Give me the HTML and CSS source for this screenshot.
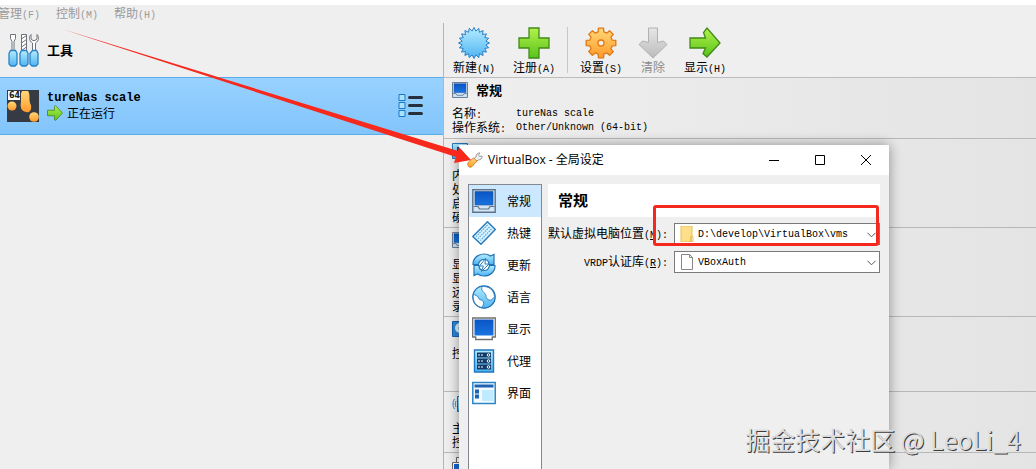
FILE: index.html
```
<!DOCTYPE html>
<html lang="zh-CN">
<head>
<meta charset="UTF-8">
<meta name="viewport" content="width=device-width, initial-scale=1.0">
<title>VirtualBox</title>
<link rel="stylesheet" href="styles.css">
</head>
<body>

<!-- Dégradés et icônes partagés -->
<svg class="defs" aria-hidden="true">
    <defs>
        <linearGradient id="blue" x1="0" y1="0" x2="0" y2="1"><stop offset="0" stop-color="#b4ecff"/><stop offset="1" stop-color="#4fb4f2"/></linearGradient>
        <linearGradient id="screen" x1="0" y1="0" x2="0" y2="1"><stop offset="0" stop-color="#0a55c4"/><stop offset="1" stop-color="#1873e0"/></linearGradient>
        <linearGradient id="green" x1="0" y1="0" x2="0" y2="1"><stop offset="0" stop-color="#b4f04c"/><stop offset="1" stop-color="#58c41a"/></linearGradient>
        <linearGradient id="orange" x1="0" y1="0" x2="0" y2="1"><stop offset="0" stop-color="#ffd878"/><stop offset="1" stop-color="#ff9a2a"/></linearGradient>
        <linearGradient id="grey" x1="0" y1="0" x2="0" y2="1"><stop offset="0" stop-color="#e6e6e6"/><stop offset="1" stop-color="#bcbcbc"/></linearGradient>
        <symbol id="pc" viewBox="0 0 24 24">
            <path d="M.8.8h22.400v22.400H.8z" fill="#d4e6f6" stroke="#5e7388" stroke-width="1.400"/>
            <path d="M3 2.500h18v13.500H3z" fill="url(#screen)" stroke="#1c4f96" stroke-width=".6"/>
            <path d="M1.500 17.500h4.500l1.500 2.500h9l1.500-2.500h4.500" fill="none" stroke="#5e7388" stroke-width="1.200"/>
        </symbol>
        <symbol id="arrow" viewBox="0 0 32 32">
            <path d="M1 10.500h14V2.500L17 1l14 15-14 15-2-1.500v-8H1z" fill="url(#green)" stroke="#3f7f16" stroke-width="1.500"/>
        </symbol>
    </defs>
</svg>

<!-- Menu -->
<nav class="menubar">
    <button class="menu">管理<span class="lat">(F)</span></button>
    <button class="menu">控制<span class="lat">(M)</span></button>
    <button class="menu">帮助<span class="lat">(H)</span></button>
</nav>

<main class="manager">
    <!-- Liste des machines -->
    <section class="sidebar">
        <div class="tools">
            <svg class="tools-icon" viewBox="0 0 32 34">
                <g fill="#fff" stroke="#6c7278">
                    <path d="M2.500 1.500h5v4l-1.500 3V18H4V8.500l-1.500-3z"/>
                    <path d="M13.500 1.500h5V18h-5z"/>
                    <path d="M23 1.500v4.500l2 1.500h2L29 6V1.500c2 2 2.500 6-1.500 8.500V18h-3v-8c-4-2.500-3.500-6.500-1.500-8.500z"/>
                    <path d="M13.500 6l5-3.500M13.500 10l5-3.500M13.500 14l5-3.500M13.500 17.500l5-3.500"/>
                </g>
                <g fill="url(#blue)" stroke="#2882c4" stroke-width="1.300">
                    <path d="M2.500 17.500h5l1.500 3V31l-2 2H3l-2-2V20.500z"/>
                    <path d="M13.500 17.500h5l1.500 3V31l-2 2h-4l-2-2V20.500z"/>
                    <path d="M24.500 17.500h4l1.500 3V31l-2 2h-4l-2-2V20.500z"/>
                </g>
            </svg>
            <span class="tools-label">工具</span>
        </div>
        <div class="machine">
            <svg class="machine-icon" viewBox="0 0 32 32">
                <path d="M0 0h32v32H0z" fill="#363a42"/>
                <path d="M15 1h6c3 4 0 9 3 14 1 6-2 8-5 7-5-1-6-5-5-10 0-5-1-7 1-11z" fill="url(#orange)"/>
                <circle cx="5" cy="16" r="4.500" fill="url(#orange)"/>
                <circle cx="27" cy="27" r="4.800" fill="url(#orange)"/>
                <path d="M0 0h14v11H0z" fill="#363a42"/>
                <path d="M1 1h12v9H1z" fill="#fff"/>
                <text x="2" y="8" class="badge64">64</text>
            </svg>
            <div class="machine-text">
                <span class="machine-name">tureNas scale</span>
                <span class="machine-state"><svg class="state-icon"><use href="#arrow"/></svg>正在运行</span>
            </div>
            <button class="machine-menu" aria-label="工具">
                <svg viewBox="0 0 24 26">
                    <g fill="#a8e2ff" stroke="#1878c8">
                        <path d="M.5 1.500h6v6h-6zM.5 9.500h6v6h-6zM.5 17.500h6v6h-6z"/>
                    </g>
                    <path d="M11 4.500h12M11 12.500h12M11 20.500h12" stroke="#26303c" stroke-width="3" stroke-linecap="round"/>
                </svg>
            </button>
        </div>
    </section>

    <!-- Barre d'outils et détails -->
    <section class="content">
        <div class="toolbar">
            <button class="tool">
                <svg viewBox="0 0 32 32"><path d="M16 .5L17.900 4.100 20.800 1.300 21.400 5.300 25.100 3.500 24.500 7.500 28.500 6.900 26.700 10.600 30.700 11.200 27.900 14.100 31.500 16 27.900 17.900 30.700 20.800 26.700 21.400 28.500 25.100 24.500 24.500 25.100 28.500 21.400 26.700 20.800 30.700 17.900 27.900 16 31.500 14.100 27.900 11.200 30.700 10.600 26.700 6.900 28.500 7.500 24.500 3.500 25.100 5.300 21.400 1.300 20.800 4.100 17.900 .5 16 4.100 14.100 1.300 11.200 5.300 10.600 3.500 6.900 7.500 7.500 6.900 3.500 10.600 5.300 11.200 1.300 14.100 4.100z" fill="url(#blue)" stroke="#2a80c8"/></svg>
                <span>新建<span class="lat">(N)</span></span>
            </button>
            <button class="tool">
                <svg viewBox="0 0 32 32"><path d="M11 1h10v10h10v10H21v10H11V21H1V11h10z" fill="url(#green)" stroke="#3f8a16" stroke-width="1.300"/></svg>
                <span>注册<span class="lat">(A)</span></span>
            </button>
            <span class="separator"></span>
            <button class="tool">
                <svg viewBox="-16 -16 32 32">
                    <path d="M-2.800-11.200L-2.600-14.800 2.600-14.800 2.800-11.200 5.900-9.900 8.600-12.300 12.300-8.600 9.900-5.900 11.200-2.800 14.800-2.600 14.800 2.600 11.200 2.800 9.900 5.900 12.300 8.600 8.600 12.300 5.900 9.900 2.800 11.200 2.600 14.800-2.600 14.800-2.800 11.200-5.900 9.900-8.600 12.300-12.300 8.600-9.900 5.900-11.200 2.800-14.800 2.600-14.800-2.600-11.200-2.800-9.900-5.900-12.300-8.600-8.600-12.300-5.900-9.900z" fill="url(#orange)" stroke="#e07814" stroke-width="1.300" stroke-linejoin="round"/>
                    <circle r="3" fill="#f4eee6" stroke="#e07814" stroke-width="1.300"/>
                </svg>
                <span>设置<span class="lat">(S)</span></span>
            </button>
            <button class="tool tool-narrow" disabled>
                <svg viewBox="0 0 32 32"><path d="M11.500 1h9v14.500l6-1.500 3.500 3.500L16 31 2 17.500 5.500 14l6 1.500z" fill="url(#grey)" stroke="#b0b0b0"/></svg>
                <span>清除</span>
            </button>
            <button class="tool">
                <svg viewBox="0 0 32 32"><path d="M1 11h15.500l-2-5.500L18 1l13 15-13 14-4-3.500 2.500-5.500H1z" fill="url(#green)" stroke="#3f8a16" stroke-width="1.300"/></svg>
                <span>显示<span class="lat">(H)</span></span>
            </button>
        </div>

        <div class="details">
            <div class="detail">
                <h2><svg><use href="#pc"/></svg>常规</h2>
                <p><span class="key">名称<span class="lat">:</span></span><span class="lat">tureNas scale</span></p>
                <p><span class="key">操作系统<span class="lat">:</span></span><span class="lat">Other/Unknown (64-bit)</span></p>
            </div>
            <div class="detail">
                <h2><svg viewBox="0 0 16 16"><path d="M.5.5h15v15H.5z" fill="url(#blue)" stroke="#2a78b8"/><path d="M5 4h6v8H5z" fill="#1c4c80"/></svg></h2>
                <p>内</p>
                <p>处</p>
                <p>启</p>
                <p>硬</p>
            </div>
            <div class="detail">
                <h2><svg><use href="#pc"/></svg></h2>
                <p>显</p>
                <p>显</p>
                <p>远</p>
                <p>录</p>
            </div>
            <div class="detail detail-tall">
                <h2><svg viewBox="0 0 16 16"><path d="M.5.5h15v15H.5z" fill="#2a86d8" stroke="#1a5ea8"/><circle cx="8" cy="7" r="5" fill="#d8f0ff"/><circle cx="8" cy="7" r="1.500" fill="#1a5ea8"/></svg></h2>
                <p>控</p>
            </div>
            <div class="detail">
                <h2><svg viewBox="0 0 16 16"><path d="M2.500 3c-2 3-2 7 0 10M4 5c-1 2-1 4 0 6" fill="none" stroke="#2a86d8"/><path d="M5.500.5h8v15h-8z" fill="url(#blue)" stroke="#1a6eb8"/></svg></h2>
                <p>主</p>
                <p>控</p>
            </div>
            <div class="detail">
                <h2><svg viewBox="0 0 16 16"><path d="M4.500.5h11v9h-11z" fill="#fff" stroke="#666"/><path d="M.5 5.500h11v10H.5z" fill="#fff" stroke="#666"/><path d="M2 7h8v7H2z" fill="#1462cc"/></svg></h2>
            </div>
        </div>
    </section>
</main>

<!-- Fenêtre des réglages -->
<div class="dialog" role="dialog" aria-labelledby="dialog-title">
    <div class="titlebar">
        <svg class="title-icon" viewBox="0 0 16 16">
            <path d="M6 7l3-2c0-3 2-4.500 4-4l-1.500 2 1 1.500L15 4c.5 3-2 4-4 4L9 10z" fill="#eee" stroke="#888" stroke-width=".8"/>
            <path d="M1.500 10l5-4L10 9l-5 5.500c-1 1-2.500 1-3.500 0s-1-3.500 0-4.500z" fill="url(#orange)" stroke="#c47a14" stroke-width=".8"/>
        </svg>
        <h1 id="dialog-title">VirtualBox - 全局设定</h1>
        <button class="win-btn" aria-label="最小化"><svg viewBox="0 0 10 10"><path d="M0 5.500h10" stroke="#000"/></svg></button>
        <button class="win-btn" aria-label="最大化"><svg viewBox="0 0 10 10"><path d="M.5.5h9v9h-9z" fill="none" stroke="#000"/></svg></button>
        <button class="win-btn" aria-label="关闭"><svg viewBox="0 0 10 10"><path d="M0 0l10 10M10 0L0 10" stroke="#000"/></svg></button>
    </div>

    <div class="dialog-body">
        <nav class="categories">
            <button class="category selected"><svg><use href="#pc"/></svg>常规</button>
            <button class="category">
                <svg viewBox="0 0 24 24">
                    <path d="M15.500.8L23.300 8.500 9 23.200.8 15.500z" fill="#d4f2ff" stroke="#2878b8" stroke-width="1.400" stroke-linejoin="round"/>
                    <path d="M15.500 4L4 15.500M17.500 6L6 17.500M19.500 8L8.500 19.500" stroke="#5aa6dc" stroke-width="1.200" stroke-dasharray="1.500 1"/>
                </svg>热键
            </button>
            <button class="category">
                <svg viewBox="0 0 24 24">
                    <path d="M1 11.500C1 5 6 1 12 1c3 0 5 .8 6.500 2L22 1.500v10h-5c0-3-2-5-5-5s-5 2-5.500 5z" fill="url(#blue)" stroke="#2272b4" stroke-width="1.200"/>
                    <path d="M23 12.500C23 19 18 23 12 23c-3 0-5-.8-6.500-2L2 22.500v-10h5c0 3 2 5 5 5s5-2 5.500-5z" fill="url(#blue)" stroke="#2272b4" stroke-width="1.200"/>
                    <path d="M13.500 5.500L7.500 13h3.800l-1.800 5.500L17 11h-4z" fill="#e4f8ff" stroke="#2272b4" stroke-width=".9"/>
                </svg>更新
            </button>
            <button class="category">
                <svg viewBox="0 0 24 24">
                    <circle cx="12" cy="12" r="11.200" fill="url(#blue)" stroke="#2272b4" stroke-width="1.200"/>
                    <path d="M10 1.500c-1 4 1 5 3 7s0 4 3 6 5-1 6.500-3C22 5 17 1 10 1.500zM1.500 9c2 2 4 1 5 4s4 1 5 4-2 4-1 5.500C4 22 0 16 1.500 9z" fill="#fff" stroke="#2272b4" stroke-width=".8"/>
                </svg>语言
            </button>
            <button class="category">
                <svg viewBox="0 0 24 24">
                    <path d="M.7 1h22.600v19h-3v2.500H3.700V20h-3z" fill="#fff" stroke="#707070" stroke-width="1.300"/>
                    <path d="M2.500 2.500h19v16h-19z" fill="url(#screen)"/>
                </svg>显示
            </button>
            <button class="category">
                <svg viewBox="0 0 24 24">
                    <path d="M2.500 1h19v22h-19z" fill="url(#blue)" stroke="#1f78c0" stroke-width="1.400"/>
                    <path d="M5 3.500h14v5H5zM5 9.500h14v5H5zM5 15.500h14v5H5z" fill="#113a66"/>
                    <path d="M6 6h6M6 12h6M6 18h6" stroke="#fff" stroke-dasharray="2 1"/>
                    <g fill="none" stroke="#fff"><circle cx="16.500" cy="6" r="1.300"/><circle cx="16.500" cy="12" r="1.300"/><circle cx="16.500" cy="18" r="1.300"/></g>
                </svg>代理
            </button>
            <button class="category">
                <svg viewBox="0 0 24 24">
                    <path d="M.8 1.500h22.400v21H.8z" fill="#f4fbff" stroke="#2a86c8" stroke-width="1.500"/>
                    <path d="M2.500 3.500h19v3h-19zM3 8.500h4v4H3zM3 13.500h4v4H3z" fill="#1f62b0"/>
                    <path d="M10 9h11.500v11H10z" fill="#bfeaff"/>
                </svg>界面
            </button>
        </nav>

        <div class="page">
            <h2 class="page-title">常规</h2>
            <form class="settings">
                <label for="vm-folder">默认虚拟电脑位置<span class="lat">(<u>M</u>):</span></label>
                <div class="combo">
                    <select id="vm-folder"><option>D:\develop\VirtualBox\vms</option></select>
                    <svg class="combo-icon" viewBox="0 0 14 16"><path d="M1 0h11v16H1z" fill="#ffe08a"/><path d="M1 0h11v10l1 1v5H1z" fill="none" stroke="#e8bf50"/><path d="M11 10v6" stroke="#d8a830"/></svg>
                    <svg class="combo-arrow" viewBox="0 0 9 6"><path d="M.5.8l4 4 4-4" fill="none" stroke="#555"/></svg>
                </div>
                <label for="vrdp-lib"><span class="lat">VRDP</span>认证库<span class="lat">(<u>R</u>):</span></label>
                <div class="combo">
                    <select id="vrdp-lib"><option>VBoxAuth</option></select>
                    <svg class="combo-icon" viewBox="0 0 14 16"><path d="M1.500.5h8l3 3v12h-11z" fill="#fff" stroke="#888"/><path d="M9.500.5v3h3" fill="none" stroke="#888"/></svg>
                    <svg class="combo-arrow" viewBox="0 0 9 6"><path d="M.5.8l4 4 4-4" fill="none" stroke="#555"/></svg>
                </div>
            </form>
        </div>
    </div>
</div>

<!-- Annotations -->
<div class="highlight"></div>
<svg class="pointer" viewBox="0 0 410 140">
    <path d="M0 0L396 122 397 118 409 131 392 134 394 128z" fill="#f7281c"/>
</svg>
<div class="watermark">掘金技术社区 @ LeoLi_4</div>

</body>
</html>
```
FILE: styles.css
```
* {
    box-sizing: border-box;
}

body {
    margin: 0;
    height: 100vh;
    display: flex;
    flex-direction: column;
    position: relative;
    overflow: hidden;
    background-color: #efefef;
    border-top: 5px solid #fff;
    color: #000;
    font-family: "Noto Sans CJK SC", sans-serif;
    font-size: 12px;
    line-height: 14px;
}

button {
    margin: 0;
    padding: 0;
    border: none;
    background: none;
    color: inherit;
    font: inherit;
}

h1, h2, p {
    margin: 0;
}

svg {
    flex: none;
    display: block;
}

.defs {
    position: absolute;
    width: 0;
    height: 0;
}

/* Texte latin à demi-chasse */
.lat {
    font-family: "Liberation Mono", monospace;
    font-size: 10px;
}

/* Menu */
.menubar {
    flex: none;
    display: flex;
    gap: 16px;
    height: 18px;
    color: #9a9a9a;
}

.menu {
    white-space: nowrap;
}

.menu:first-child {
    margin-left: -2px;
}

.manager {
    flex: 1;
    display: flex;
    min-height: 0;
}

/* Liste des machines */
.sidebar {
    flex: none;
    width: 443px;
}

.tools {
    display: flex;
    align-items: center;
    gap: 7px;
    height: 54px;
    padding-left: 8px;
}

.tools-icon {
    width: 32px;
    height: 34px;
}

.tools-label {
    font-size: 13px;
    font-weight: bold;
}

.machine {
    display: flex;
    align-items: center;
    height: 58px;
    padding: 0 20px 0 7px;
    border-top: 1px solid #58aee8;
    border-bottom: 1px solid #58aee8;
    background: linear-gradient(#98d2ff, #82c4fb);
}

.machine-icon {
    width: 32px;
    height: 32px;
}

.badge64 {
    font-family: "DejaVu Sans", sans-serif;
    font-size: 8px;
    font-weight: bold;
    fill: #222;
}

.machine-text {
    flex: 1;
    padding-left: 8px;
}

.machine-name {
    display: block;
    font-family: "Liberation Mono", monospace;
    font-weight: bold;
}

.machine-state {
    display: flex;
    align-items: center;
    gap: 4px;
}

.state-icon {
    width: 16px;
    height: 16px;
}

.machine-menu svg {
    width: 25px;
    height: 26px;
}

/* Barre d'outils */
.content {
    flex: 1;
    min-width: 0;
    border-left: 1px solid #b4b4b4;
}

.toolbar {
    display: flex;
    height: 55px;
    padding-top: 4px;
    border-bottom: 1px solid #bcbcbc;
}

.tool {
    display: flex;
    flex-direction: column;
    align-items: center;
    gap: 1px;
    width: 60px;
    white-space: nowrap;
}

.tool svg {
    width: 32px;
    height: 32px;
}

.tool-narrow {
    width: 44px;
}

.tool:disabled {
    color: #8c8c8c;
}

.separator {
    width: 1px;
    height: 46px;
    margin: 0 3px;
    background-color: #c8c8c8;
}

/* Détails de la machine */
.details {
    background: linear-gradient(90deg, #efefef, #e4e4e4);
}

.detail {
    padding: 4px 8px 3px;
    border-bottom: 1px solid #b8b8b8;
}

.detail-tall {
    min-height: 75px;
}

.detail h2 {
    display: flex;
    align-items: center;
    gap: 8px;
    height: 16px;
    margin-bottom: 9px;
    font-size: 13px;
}

.detail h2 svg {
    width: 16px;
    height: 16px;
}

.detail p {
    display: flex;
    height: 14px;
    align-items: center;
}

.key {
    width: 64px;
}

/* Fenêtre des réglages */
.dialog {
    position: absolute;
    top: 140px;
    bottom: 0;
    left: 459px;
    display: flex;
    flex-direction: column;
    width: 430px;
    background-color: #efefef;
    box-shadow: 0 0 12px rgba(0, 0, 0, 0.4);
}

.titlebar {
    flex: none;
    display: flex;
    align-items: center;
    height: 30px;
    padding-left: 8px;
    background-color: #fff;
}

.title-icon {
    width: 16px;
    height: 16px;
}

.titlebar h1 {
    flex: 1;
    padding-left: 5px;
    font-family: "Open Sans", "Noto Sans CJK SC", sans-serif;
    font-size: 12px;
    font-weight: normal;
}

.win-btn {
    display: flex;
    align-items: center;
    justify-content: center;
    width: 46px;
    height: 30px;
}

.win-btn svg {
    width: 10px;
    height: 10px;
}

.dialog-body {
    flex: 1;
    display: flex;
    gap: 6px;
    min-height: 0;
    padding: 9px 9px 0;
}

.categories {
    flex: none;
    width: 74px;
    border: 1px solid #828790;
    border-bottom: none;
    background-color: #fff;
}

.category {
    display: flex;
    align-items: center;
    gap: 11px;
    width: 100%;
    height: 32px;
    padding-left: 3px;
    white-space: nowrap;
}

.category svg {
    width: 24px;
    height: 24px;
}

.category.selected {
    background-color: #cce8ff;
}

.page {
    flex: 1;
}

.page-title {
    height: 33px;
    padding-left: 10px;
    background-color: #fff;
    font-size: 15px;
    line-height: 32px;
}

.settings {
    display: grid;
    grid-template-columns: 120px 1fr;
    gap: 6px;
    align-items: center;
    padding-top: 6px;
}

.settings label {
    text-align: right;
    white-space: nowrap;
}

.combo {
    position: relative;
    height: 22px;
}

.combo select {
    appearance: none;
    width: 100%;
    height: 22px;
    margin: 0;
    padding: 0 20px 0 23px;
    border: 1px solid #7a7a7a;
    border-radius: 0;
    background-color: #fff;
    color: #000;
    font-family: "Liberation Mono", monospace;
    font-size: 10px;
}

.combo-icon {
    position: absolute;
    top: 3px;
    left: 6px;
    width: 14px;
    height: 16px;
}

.combo-arrow {
    position: absolute;
    top: 9px;
    right: 4px;
    width: 9px;
    height: 6px;
}

/* Annotations */
.highlight {
    position: absolute;
    top: 200px;
    left: 653px;
    width: 226px;
    height: 41px;
    border: 3px solid #f5281e;
    border-radius: 3px;
}

.pointer {
    position: absolute;
    top: 24px;
    left: 62px;
    width: 410px;
    height: 140px;
}

.watermark {
    position: absolute;
    right: 15px;
    bottom: 12px;
    color: #dcdcdc;
    font-size: 25px;
    font-weight: 400;
    line-height: 36px;
    text-shadow: 1px 1px 0 #3c3c3c;
    white-space: nowrap;
}
```
